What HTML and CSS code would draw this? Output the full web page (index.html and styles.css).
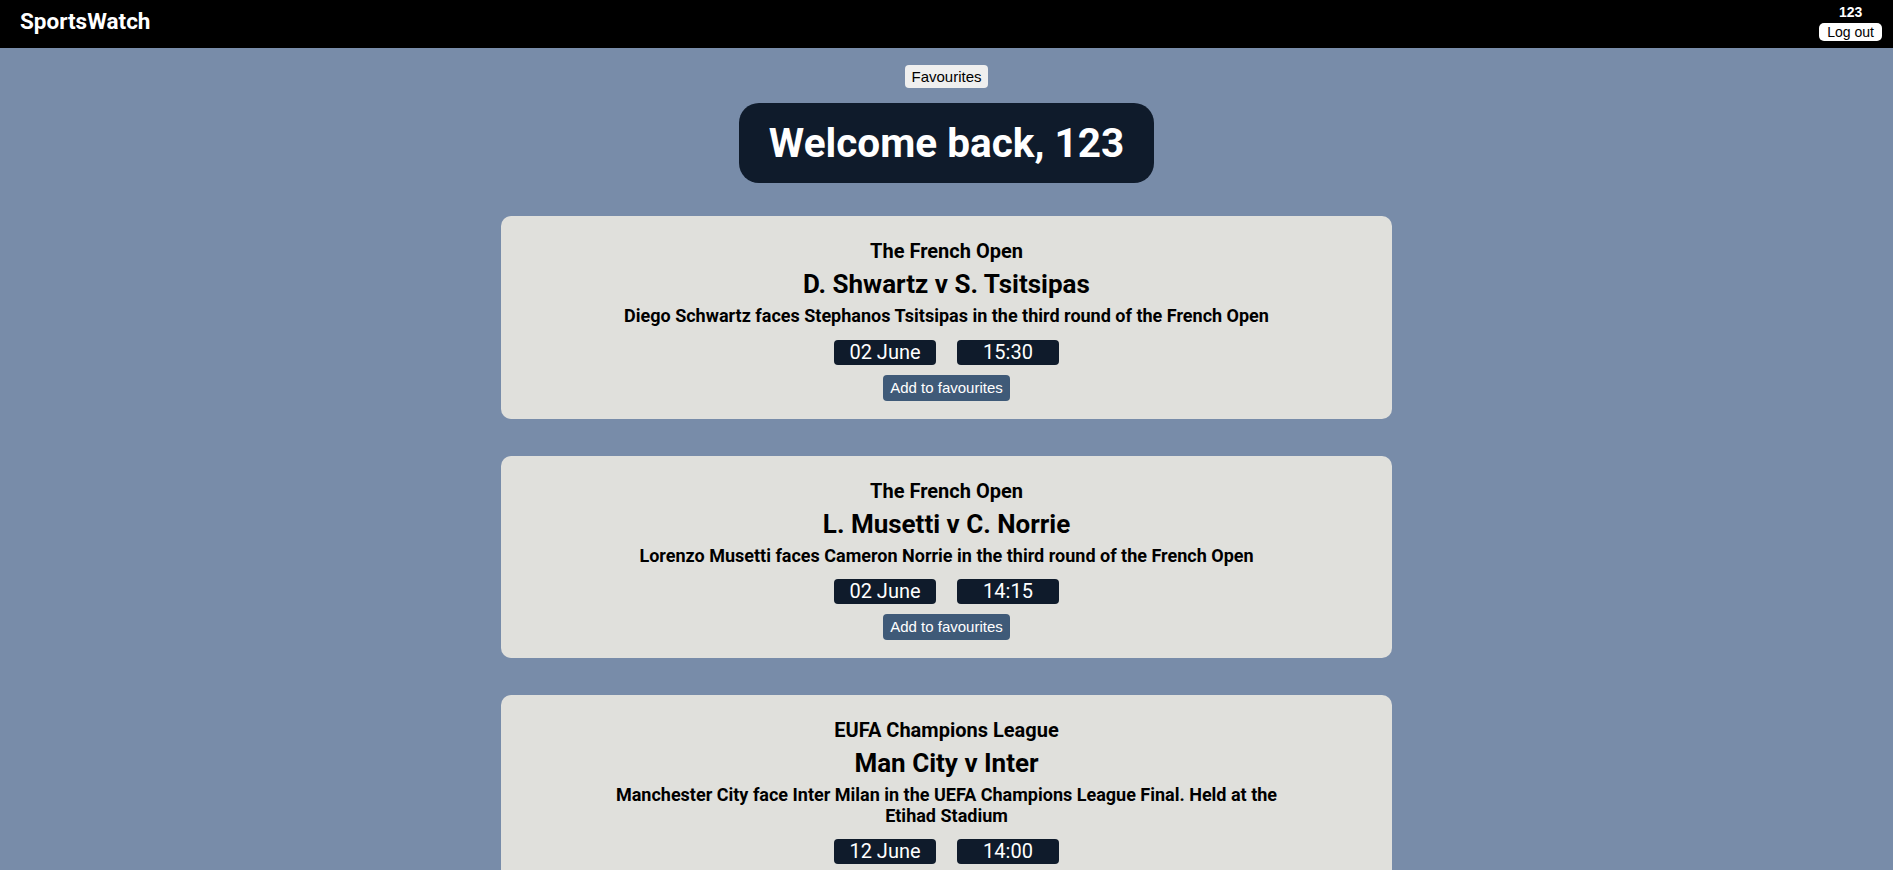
FILE: index.html
```html
<!DOCTYPE html>
<html lang="en">
<head>
<meta charset="utf-8">
<title>SportsWatch</title>
<link rel="stylesheet" href="styles.css">
</head>
<body>
<header class="topbar">
  <div class="brand">SportsWatch</div>
  <div class="user">
    <span class="user-name">123</span>
    <button class="logout">Log out</button>
  </div>
</header>
<main class="page">
  <button class="fav-link">Favourites</button>
  <h1 class="welcome">Welcome back, 123</h1>
  <section class="events">
    <article class="card">
      <h3 class="comp">The French Open</h3>
      <h2 class="match">D. Shwartz v S. Tsitsipas</h2>
      <p class="desc">Diego Schwartz faces Stephanos Tsitsipas in the third round of the French Open</p>
      <div class="when"><span class="pill">02 June</span><span class="pill">15:30</span></div>
      <button class="add">Add to favourites</button>
    </article>
    <article class="card">
      <h3 class="comp">The French Open</h3>
      <h2 class="match">L. Musetti v C. Norrie</h2>
      <p class="desc">Lorenzo Musetti faces Cameron Norrie in the third round of the French Open</p>
      <div class="when"><span class="pill">02 June</span><span class="pill">14:15</span></div>
      <button class="add">Add to favourites</button>
    </article>
    <article class="card">
      <h3 class="comp">EUFA Champions League</h3>
      <h2 class="match">Man City v Inter</h2>
      <p class="desc">Manchester City face Inter Milan in the UEFA Champions League Final. Held at the Etihad Stadium</p>
      <div class="when"><span class="pill">12 June</span><span class="pill">14:00</span></div>
      <button class="add">Add to favourites</button>
    </article>
  </section>
</main>
</body>
</html>
```
FILE: styles.css
```css
html, body {
  margin: 0;
  padding: 0;
}
body {
  background: #788ca9;
  font-family: Roboto, "Liberation Sans", Arial, sans-serif;
  color: #000;
}
.topbar {
  height: 48px;
  background: #000;
  display: flex;
  align-items: center;
  justify-content: space-between;
  padding: 0 11px 0 20px;
  box-sizing: border-box;
}
.brand {
  color: #fff;
  font-weight: 700;
  font-size: 22.5px;
  margin-top: -6px;
}
.user {
  display: flex;
  flex-direction: column;
  align-items: center;
  margin-top: -4px;
}
.user-name {
  color: #fff;
  font-weight: 700;
  font-size: 14px;
  line-height: 17px;
  font-family: "Liberation Sans", Arial, sans-serif;
}
.logout {
  font-family: "Liberation Sans", Arial, sans-serif;
  font-size: 14px;
  line-height: 16px;
  padding: 1px 8px;
  margin-top: 2px;
  border: none;
  border-radius: 5px;
  background: #fff;
  color: #000;
}
.page {
  display: flex;
  flex-direction: column;
  align-items: center;
  padding-top: 17px;
}
.fav-link {
  font-family: "Liberation Sans", Arial, sans-serif;
  font-size: 15px;
  line-height: 17px;
  padding: 3px 6.5px;
  border: none;
  border-radius: 4px;
  background: #efefef;
  color: #000;
}
.welcome {
  margin: 15px 0 0;
  background: #0f1b2b;
  color: #fff;
  font-size: 40.5px;
  font-weight: 700;
  line-height: 52px;
  padding: 14px 29.5px;
  border-radius: 20px;
}
.events {
  display: flex;
  flex-direction: column;
  gap: 37px;
  margin-top: 33px;
}
.card {
  width: 891px;
  box-sizing: border-box;
  background: #e0e0dc;
  border-radius: 10px;
  padding: 23px 90px 18px;
  display: flex;
  flex-direction: column;
  align-items: center;
  text-align: center;
}
.comp {
  margin: 0;
  font-size: 20px;
  font-weight: 700;
  line-height: 24px;
}
.match {
  margin: 7px 0 0;
  font-size: 26px;
  font-weight: 700;
  line-height: 29px;
}
.desc {
  margin: 7px 0 0;
  font-size: 18px;
  font-weight: 700;
  line-height: 20.5px;
  max-width: 705px;
}
.when {
  display: flex;
  gap: 21px;
  margin-top: 13px;
}
.pill {
  width: 102px;
  height: 25px;
  line-height: 25px;
  background: #0f1b2b;
  color: #fff;
  font-size: 20px;
  border-radius: 4px;
}
.add {
  margin-top: 10px;
  font-family: "Liberation Sans", Arial, sans-serif;
  font-size: 15px;
  line-height: 18px;
  padding: 4px 7px;
  border: none;
  border-radius: 4px;
  background: #3f5a78;
  color: #fff;
}
```
